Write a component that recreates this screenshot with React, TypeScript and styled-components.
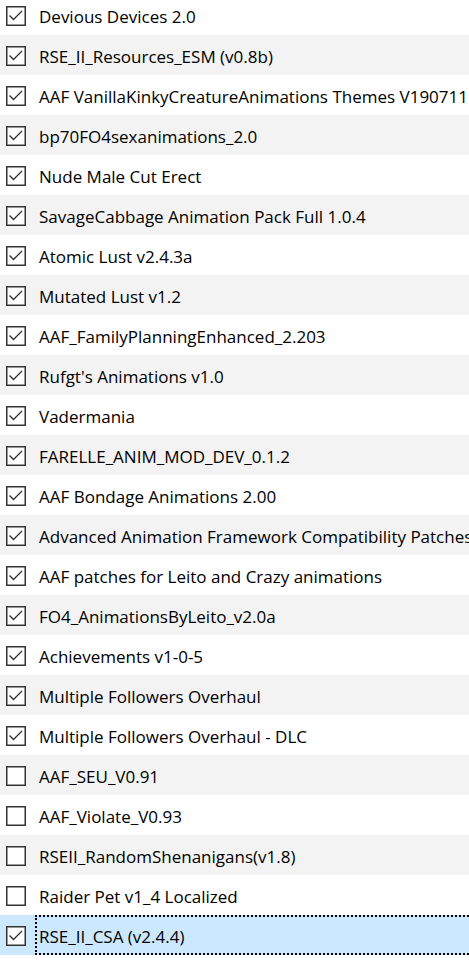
import React from "react";
import styled, { createGlobalStyle } from "styled-components";

const GlobalStyle = createGlobalStyle`
  html, body {
    margin: 0;
    padding: 0;
    background: #ffffff;
    overflow: hidden;
  }
`;

const ModList = styled.div`
  display: flex;
  flex-direction: column;
  margin-top: -5px;
  width: 469px;
  font-family: "Open Sans", "Noto Sans", sans-serif;
  font-size: 17px;
  color: #000000;
`;

const Row = styled.div<{ $odd: boolean; $selected: boolean }>`
  display: flex;
  align-items: center;
  height: 40px;
  background: ${(p) => (p.$selected ? "#cce8ff" : p.$odd ? "#f3f3f3" : "#ffffff")};
`;

const Box = styled.div`
  flex: 0 0 auto;
  width: 20px;
  height: 20px;
  margin-left: 6px;
  margin-top: 2px;
  display: flex;
`;

const Label = styled.div<{ $focused: boolean }>`
  flex: 1 1 auto;
  align-self: stretch;
  display: flex;
  align-items: center;
  margin-left: 9px;
  padding-left: 2px;
  padding-top: 3px;
  white-space: nowrap;
  overflow: hidden;
  border: 2px dotted ${(p) => (p.$focused ? "#000000" : "transparent")};
  border-right: none;
  box-sizing: border-box;
`;

interface Mod {
  name: string;
  enabled: boolean;
}

const mods: Mod[] = [
  { name: "Devious Devices 2.0", enabled: true },
  { name: "RSE_II_Resources_ESM (v0.8b)", enabled: true },
  { name: "AAF VanillaKinkyCreatureAnimations Themes V190711", enabled: true },
  { name: "bp70FO4sexanimations_2.0", enabled: true },
  { name: "Nude Male Cut Erect", enabled: true },
  { name: "SavageCabbage Animation Pack Full 1.0.4", enabled: true },
  { name: "Atomic Lust v2.4.3a", enabled: true },
  { name: "Mutated Lust v1.2", enabled: true },
  { name: "AAF_FamilyPlanningEnhanced_2.203", enabled: true },
  { name: "Rufgt's Animations v1.0", enabled: true },
  { name: "Vadermania", enabled: true },
  { name: "FARELLE_ANIM_MOD_DEV_0.1.2", enabled: true },
  { name: "AAF Bondage Animations 2.00", enabled: true },
  { name: "Advanced Animation Framework Compatibility Patches", enabled: true },
  { name: "AAF patches for Leito and Crazy animations", enabled: true },
  { name: "FO4_AnimationsByLeito_v2.0a", enabled: true },
  { name: "Achievements v1-0-5", enabled: true },
  { name: "Multiple Followers Overhaul", enabled: true },
  { name: "Multiple Followers Overhaul - DLC", enabled: true },
  { name: "AAF_SEU_V0.91", enabled: false },
  { name: "AAF_Violate_V0.93", enabled: false },
  { name: "RSEII_RandomShenanigans(v1.8)", enabled: false },
  { name: "Raider Pet v1_4 Localized", enabled: false },
  { name: "RSE_II_CSA (v2.4.4)", enabled: true },
];

const selectedIndex = 23;

const CheckBox = ({ checked }: { checked: boolean }) => (
  <Box>
    <svg width="20" height="20" viewBox="0 0 20 20">
      <rect x="0.75" y="0.75" width="18.5" height="18.5" fill="#ffffff" stroke="#333333" strokeWidth="1.5" />
      {checked ? (
        <path d="M3.5 9.5 L7.5 13.5 L16 5" fill="none" stroke="#333333" strokeWidth="1.4" />
      ) : null}
    </svg>
  </Box>
);

const App: React.FC = () => {
  return (
    <>
      <GlobalStyle />
      <ModList>
        {mods.map((mod, i) => (
          <Row key={mod.name} $odd={i % 2 === 1} $selected={i === selectedIndex}>
            <CheckBox checked={mod.enabled} />
            <Label $focused={i === selectedIndex}>{mod.name}</Label>
          </Row>
        ))}
        <Row $odd={false} $selected={false} />
      </ModList>
    </>
  );
};

export default App;
